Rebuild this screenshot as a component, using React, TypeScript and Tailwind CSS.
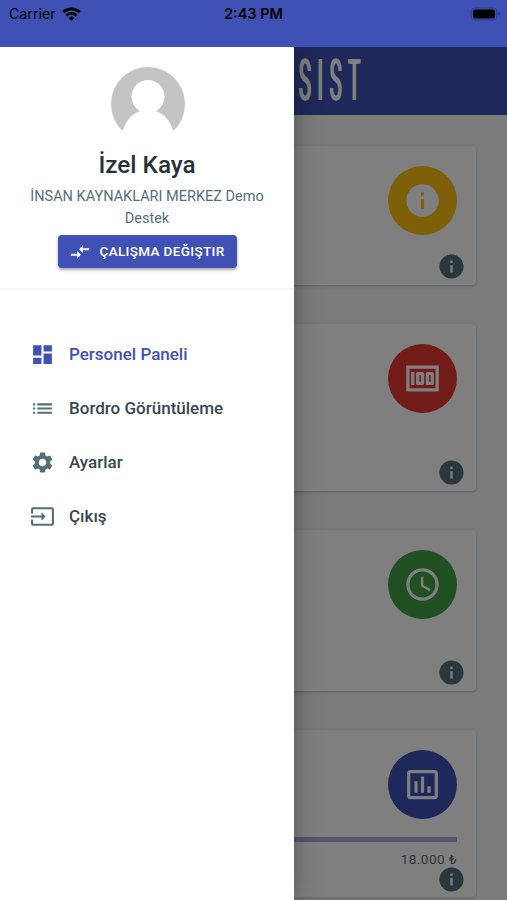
import type { IconType } from 'react-icons';
import {
  MdAccessTime,
  MdCompareArrows,
  MdDashboard,
  MdInfo,
  MdInput,
  MdInsertChartOutlined,
  MdList,
  MdMoney,
  MdSettings,
} from 'react-icons/md';

type MenuItem = {
  label: string;
  icon: IconType;
  active?: boolean;
};

type Card = {
  id: string;
  icon: IconType;
  color: string;
  size: string;
  total?: string;
};

const menuItems: MenuItem[] = [
  { label: 'Personel Paneli', icon: MdDashboard, active: true },
  { label: 'Bordro Görüntüleme', icon: MdList },
  { label: 'Ayarlar', icon: MdSettings },
  { label: 'Çıkış', icon: MdInput },
];

const cards: Card[] = [
  { id: 'info', icon: MdInfo, color: 'bg-[#fbc011]', size: 'h-[139px]' },
  { id: 'payroll', icon: MdMoney, color: 'bg-[#e53935]', size: 'h-[167px]' },
  { id: 'hours', icon: MdAccessTime, color: 'bg-[#43a047]', size: 'h-[161px]' },
  {
    id: 'advance',
    icon: MdInsertChartOutlined,
    color: 'bg-[#3f51b5]',
    size: 'h-[167px]',
    total: '18.000 ₺',
  },
];

function StatusBar() {
  return (
    <div className="grid h-[47px] grid-cols-3 items-start bg-[#3f51b5] text-black">
      <div className="flex h-7 items-center gap-[6px] pl-[9px]">
        <span className="font-['Inter'] text-[14.2px]">Carrier</span>
        <svg width="19" height="14" viewBox="0 0 19 14" fill="none" stroke="currentColor">
          <path d="M1.3 5.2a11.8 11.8 0 0 1 16.4 0" strokeWidth="2.8" />
          <path d="M4.3 8.5a7.5 7.5 0 0 1 10.4 0" strokeWidth="2.6" />
          <path d="M6.6 10.8a4 4 0 0 1 5.8 0L9.5 13.8z" fill="currentColor" stroke="none" />
        </svg>
      </div>
      <span className="flex h-7 items-center justify-center font-['Inter'] text-[14.5px] font-semibold">
        2:43 PM
      </span>
      <div className="flex h-[27px] items-center justify-end pr-[6px]">
        <svg width="31" height="14" viewBox="0 0 31 14">
          <rect x="1" y="1" width="26" height="12" rx="3.5" fill="none" stroke="#2f3d8a" />
          <rect x="3" y="2.5" width="22" height="9" rx="2" fill="#000" />
          <path d="M28.5 5v4c1.5-.5 2-1.2 2-2s-.5-1.5-2-2z" fill="#2f3d8a" />
        </svg>
      </div>
    </div>
  );
}

function DashboardCard({ card }: { card: Card }) {
  const Icon = card.icon;

  return (
    <div
      className={`relative ml-[30px] w-[446px] shrink-0 rounded bg-white shadow-[0_1px_3px_rgba(63,63,68,0.3)] ${card.size}`}
    >
      <div className="flex justify-end pt-5 pr-[19px]">
        <div
          className={`flex size-[69px] items-center justify-center rounded-full ${card.color}`}
        >
          <Icon className="size-[39px] text-white" />
        </div>
      </div>

      {card.total && (
        <div className="pr-[19px] pl-5 text-right">
          <div className="mt-[18px] h-[5px] bg-[#b2a8d8]" />
          <p className="mt-[7px] text-[13.5px] leading-5 tracking-[0.5px] text-[#546e7a]">
            {card.total}
          </p>
        </div>
      )}

      <MdInfo
        className={`absolute right-[10px] size-[29px] text-[#546e7a] ${card.total ? 'bottom-[3px]' : 'bottom-[4px]'}`}
      />
    </div>
  );
}

function Dashboard() {
  return (
    <div className="h-full overflow-hidden bg-[#f4f6f8]">
      <div className="flex h-[68px] items-center bg-[#3f51b5] pb-[3px] pl-[299px]">
        <span className="origin-center scale-y-[2.85] text-[20px] leading-5 tracking-[6.7px] text-white [text-shadow:0.7px_0_0_#fff,-0.7px_0_0_#fff]">
          SIST
        </span>
      </div>
      <div className="flex flex-col gap-[39px] pt-[31px]">
        {cards.map((card) => (
          <DashboardCard key={card.id} card={card} />
        ))}
      </div>
    </div>
  );
}

function Drawer() {
  return (
    <aside className="absolute inset-y-0 left-0 w-[294px] bg-white shadow-[0_0_24px_rgba(0,0,0,0.35)]">
      <div className="flex h-[243px] flex-col items-center border-b-2 border-[#f6f6f6] pt-5">
        <svg className="ml-px" width="74" height="74" viewBox="0 0 74 74">
          <circle cx="37" cy="37" r="37" fill="#c4c4c4" />
          <circle cx="37" cy="29.5" r="16.5" fill="#fff" />
          <path d="M12 63C15 54 20 47.5 28 44.5V42h18v2.5C54 47.5 59 54 62 63h12v11H0V63z" fill="#fff" />
        </svg>
        <h1 className="mt-[9px] text-[24.3px] leading-[30px] font-medium text-[#263238]">
          İzel Kaya
        </h1>
        <p className="mt-[6px] w-[260px] text-center text-[14.5px] leading-[22px] text-[#546e7a]">
          İNSAN KAYNAKLARI MERKEZ Demo Destek
        </p>
        <button className="mt-[5px] flex h-[33px] w-[179px] shrink-0 items-center rounded bg-[#3f51b5] pl-[11px] text-[13.5px] font-medium tracking-[0.35px] whitespace-nowrap text-white shadow-[0_2px_3px_rgba(0,0,0,0.35)]">
          <MdCompareArrows className="mr-[9px] size-[22px]" />
          ÇALIŞMA DEĞIŞTIR
        </button>
      </div>

      <nav className="flex flex-col pt-[38px] pl-[30px]">
        {menuItems.map((item) => (
          <a
            key={item.label}
            className={`flex h-[53.8px] items-center gap-[14px] text-[17px] font-medium ${
              item.active ? 'text-[#3f51b5]' : 'text-[#37474f]'
            }`}
          >
            <item.icon
              className={`size-[25px] ${item.active ? 'text-[#3f51b5]' : 'text-[#546e7a]'}`}
            />
            {item.label}
          </a>
        ))}
      </nav>
    </aside>
  );
}

export default function App() {
  return (
    <div className="flex h-[900px] w-[507px] flex-col overflow-hidden font-['Roboto',sans-serif]">
      <StatusBar />
      <div className="relative min-h-0 flex-1 overflow-hidden">
        <Dashboard />
        <div className="absolute inset-0 bg-black/50" />
        <Drawer />
      </div>
    </div>
  );
}
